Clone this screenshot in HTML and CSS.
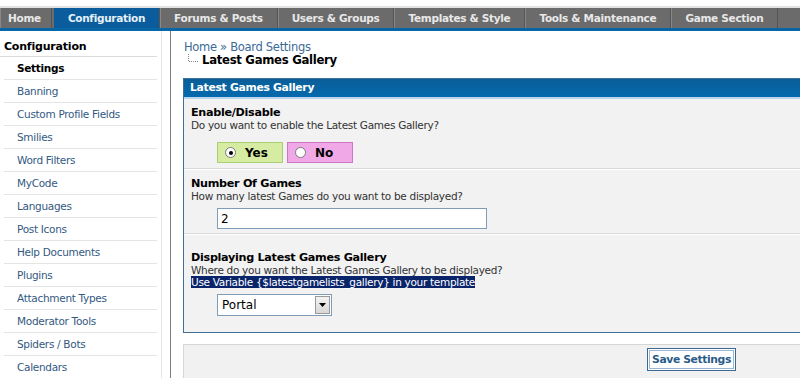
FILE: index.html
```html
<!DOCTYPE html>
<html lang="en">
<head>
  <meta charset="UTF-8" />
  <title>Board Settings</title>
  <link rel="stylesheet" href="styles.css">
</head>
<body>
  <div class="page">
    <div class="topline"></div>
    <div class="menu">
      <a href="#" class="tab home">Home</a>
      <a href="#" class="tab active">Configuration</a>
      <a href="#" class="tab">Forums &amp; Posts</a>
      <a href="#" class="tab">Users &amp; Groups</a>
      <a href="#" class="tab">Templates &amp; Style</a>
      <a href="#" class="tab">Tools &amp; Maintenance</a>
      <a href="#" class="tab">Game Section</a>
    </div>

    <div class="main">
      <div class="sidebar">
        <div class="side-title">Configuration</div>
        <a href="#" class="side-item current">Settings</a>
        <a href="#" class="side-item">Banning</a>
        <a href="#" class="side-item">Custom Profile Fields</a>
        <a href="#" class="side-item">Smilies</a>
        <a href="#" class="side-item">Word Filters</a>
        <a href="#" class="side-item">MyCode</a>
        <a href="#" class="side-item">Languages</a>
        <a href="#" class="side-item">Post Icons</a>
        <a href="#" class="side-item">Help Documents</a>
        <a href="#" class="side-item">Plugins</a>
        <a href="#" class="side-item">Attachment Types</a>
        <a href="#" class="side-item">Moderator Tools</a>
        <a href="#" class="side-item">Spiders / Bots</a>
        <a href="#" class="side-item">Calendars</a>
      </div>

      <div class="content">
        <div class="breadcrumb">
          <a href="#">Home</a> &raquo; <a href="#">Board Settings</a>
        </div>
        <div class="crumb-active">
          <svg class="crumb-icon" width="12" height="10" viewBox="0 0 12 10">
            <path d="M1.5 0 V7.5 H12" fill="none" stroke="#888" stroke-width="1" stroke-dasharray="1 1"/>
          </svg>
          Latest Games Gallery
        </div>

        <div class="panel">
          <div class="panel-head">Latest Games Gallery</div>

          <div class="row first">
            <div class="row-title">Enable/Disable</div>
            <div class="row-desc">Do you want to enable the Latest Games Gallery?</div>
            <div class="field radios">
              <label class="radio yes"><span class="dot checked"></span>Yes</label>
              <label class="radio no"><span class="dot"></span>No</label>
            </div>
          </div>

          <div class="row second">
            <div class="row-title">Number Of Games</div>
            <div class="row-desc">How many latest Games do you want to be displayed?</div>
            <div class="field">
              <div class="text-input">2</div>
            </div>
          </div>

          <div class="row last">
            <div class="row-title">Displaying Latest Games Gallery</div>
            <div class="row-desc">Where do you want the Latest Games Gallery to be displayed?</div>
            <div class="row-desc"><span class="hl">Use Variable {$latestgamelists_gallery} in your template</span></div>
            <div class="field">
              <div class="select">
                <span class="select-value">Portal</span>
                <span class="select-btn">
                  <svg width="7" height="4" viewBox="0 0 7 4"><path d="M0 0 H7 L3.5 4 Z" fill="#000"/></svg>
                </span>
              </div>
            </div>
          </div>
        </div>

        <div class="buttons">
          <button class="submit">Save Settings</button>
        </div>
      </div>
    </div>
  </div>
</body>
</html>
```

FILE: styles.css
```css
html, body {
  margin: 0;
  height: 100%;
  overflow: hidden;
  background: #fff;
  font-family: "DejaVu Sans", Verdana, sans-serif;
  font-size: 11px;
  color: #000;
}
a {
  text-decoration: none;
}
.page {
  width: 1200px;
}
.topline {
  height: 6px;
  border-bottom: 2px solid #e2e2e2;
}

/* top menu */
.menu {
  display: flex;
  height: 20px;
  background: #6b6b6b;
  border-bottom: 3px solid #0966a6;
}
.tab {
  display: flex;
  align-items: center;
  justify-content: center;
  padding: 0 14px;
  color: #e8e8e8;
  font-weight: bold;
  font-size: 10.5px;
  letter-spacing: -0.3px;
  border-right: 1px solid #555;
  box-shadow: inset 1px 0 0 #888;
}
.tab.home {
  padding: 0 10px 0 8px;
  margin-right: 2px;
}
.tab.active {
  background: #0b5c9c;
  box-shadow: none;
  color: #e6f0f8;
}

/* layout */
.main {
  display: flex;
}
.sidebar {
  width: 161px;
  padding-top: 3px;
  border-right: 1px solid #e6e6e6;
  margin-right: 8px;
}
.side-title {
  height: 22px;
  line-height: 25px;
  padding-left: 4px;
  font-weight: bold;
  font-size: 11px;
  letter-spacing: -0.2px;
  border-bottom: 1px solid #dcdcdc;
  margin-right: 4px;
}
.side-item {
  display: block;
  height: 22px;
  line-height: 22px;
  margin: 0 4px;
  padding-left: 13px;
  color: #33597f;
  font-size: 10.5px;
  letter-spacing: -0.3px;
  border-bottom: 1px solid #e4e4e4;
}
.side-item.current {
  color: #000;
  font-weight: bold;
}

.content {
  flex: 1;
  border-left: 1px solid #7d7d7d;
  padding: 10px 0 0 12px;
}
.breadcrumb {
  font-size: 11.5px;
  line-height: 13px;
  letter-spacing: -0.3px;
  color: #3a6a96;
  padding-left: 1px;
}
.breadcrumb a {
  color: #3a6a96;
}
.crumb-active {
  display: flex;
  align-items: flex-end;
  font-size: 11.7px;
  font-weight: bold;
  letter-spacing: -0.3px;
  line-height: 13px;
  padding-left: 4px;
}
.crumb-icon {
  margin-right: 3px;
  margin-bottom: 3px;
}

/* settings panel */
.panel {
  margin-top: 11px;
  border: 1px solid #3f6f97;
  background: #f2f2f2;
}
.panel-head {
  height: 18px;
  line-height: 18px;
  padding-left: 6px;
  background: linear-gradient(#0a5e99, #0569ad);
  color: #fff;
  font-weight: bold;
  font-size: 10.8px;
  letter-spacing: -0.3px;
  border-bottom: 2px solid #b9d6ee;
}
.row {
  padding: 7px 7px 5px 7px;
  border-bottom: 1px solid #d9d9d9;
  box-shadow: 0 1px 0 #fff;
}
.row.second {
  padding-top: 8px;
  padding-bottom: 4px;
}
.row.last {
  border-bottom: none;
  box-shadow: none;
  padding-top: 17px;
  padding-bottom: 16px;
}
.row-title {
  font-weight: bold;
  font-size: 11.2px;
  letter-spacing: -0.3px;
  line-height: 13px;
}
.row-desc {
  color: #333;
  font-size: 10.5px;
  letter-spacing: -0.3px;
  line-height: 12px;
}
.hl {
  background: #0a246a;
  color: #fff;
}
.field {
  padding: 7px 0 0 26px;
}
.first .field {
  padding-top: 11px;
}
.second .field {
  padding-top: 6px;
}
.last .field {
  padding-top: 6px;
}
.radios {
  display: flex;
  gap: 4px;
}
.radio {
  display: flex;
  align-items: center;
  width: 66px;
  height: 21px;
  font-weight: bold;
  font-size: 12px;
  box-sizing: border-box;
  padding-left: 7px;
}
.radio.yes {
  background: #d5eca2;
  border: 1px solid #a9cf73;
}
.radio.no {
  background: #f0a9e6;
  border: 1px solid #cf75c3;
}
.dot {
  width: 9px;
  height: 9px;
  border-radius: 50%;
  background: #fff;
  border: 1px solid #7a7a7a;
  margin-right: 9px;
  position: relative;
}
.dot.checked::after {
  content: "";
  position: absolute;
  left: 2.5px;
  top: 2.5px;
  width: 4px;
  height: 4px;
  border-radius: 50%;
  background: #000;
}
.text-input {
  width: 270px;
  height: 21px;
  line-height: 21px;
  padding-left: 3px;
  background: #fff;
  border: 1px solid #7f9db9;
  box-sizing: border-box;
  font-size: 12px;
}
.select {
  display: flex;
  width: 115px;
  height: 22px;
  background: #fff;
  border: 1px solid #7f9db9;
  box-sizing: border-box;
}
.select-value {
  flex: 1;
  line-height: 20px;
  padding-left: 4px;
  font-size: 12px;
}
.select-btn {
  width: 15px;
  margin: 1px;
  display: flex;
  align-items: center;
  justify-content: center;
  background: linear-gradient(#f4f4f4, #d6d6d6);
  border: 1px solid #9a9a9a;
  box-sizing: border-box;
}

.buttons {
  margin-top: 11px;
  height: 40px;
  background: #f1f1f1;
  border: 1px solid #d6d6d6;
  padding-top: 3px;
  text-align: center;
}
.submit {
  font-family: "DejaVu Sans", Verdana, sans-serif;
  font-weight: bold;
  font-size: 10.8px;
  letter-spacing: -0.4px;
  color: #2b5b88;
  background: #fff;
  border: 1px solid #3a6a94;
  outline: 1px solid #9bb7d0;
  outline-offset: -3px;
  padding: 4px 4px;
}
```
